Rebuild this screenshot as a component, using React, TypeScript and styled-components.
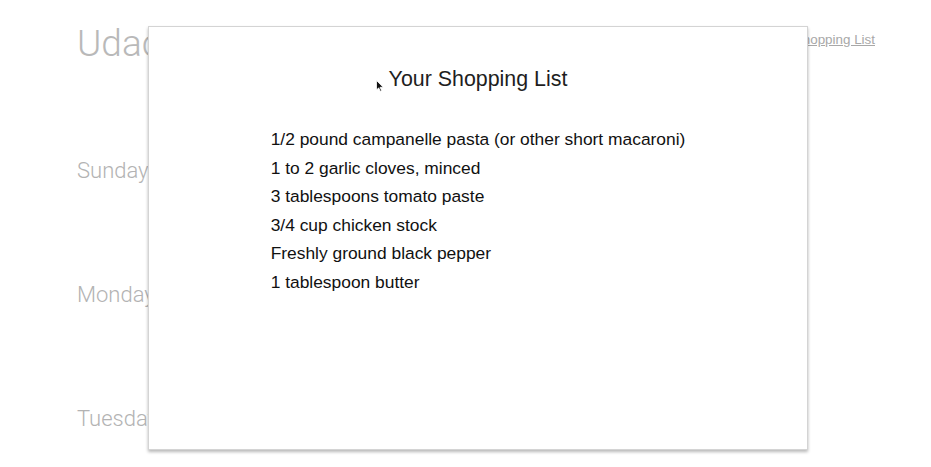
import React from "react";
import styled, { createGlobalStyle } from "styled-components";

const Global = createGlobalStyle`
  html, body { margin: 0; padding: 0; background: #fff; }
  body { font-family: "Liberation Sans", Arial, sans-serif; overflow: hidden; }
`;

const Page = styled.div`
  position: relative;
  width: 931px;
  height: 467px;
  padding: 22px 56px 0 77px;
  box-sizing: border-box;
`;

const Header = styled.header`
  display: flex;
  justify-content: space-between;
  align-items: flex-start;
`;

const Brand = styled.h1`
  margin: 0;
  font-family: Roboto, "Liberation Sans", sans-serif;
  font-weight: 300;
  font-size: 37px;
  line-height: 44px;
  color: #b9b9b9;
`;

const NavLink = styled.a`
  margin-top: 10px;
  font-family: "Liberation Sans", Arial, sans-serif;
  font-size: 13.4px;
  color: #a8a8a8;
  text-decoration: underline;
`;

const Days = styled.div`
  display: flex;
  flex-direction: column;
  gap: 99px;
  margin-top: 92px;
`;

const Day = styled.div`
  font-family: Roboto, "Liberation Sans", sans-serif;
  font-weight: 300;
  font-size: 22px;
  line-height: 25px;
  color: #b3b3b3;
`;

const Modal = styled.div`
  position: absolute;
  left: 148px;
  top: 26px;
  width: 660px;
  height: 424px;
  box-sizing: border-box;
  background: #fff;
  border: 1px solid #d4d4d4;
  box-shadow: 0 2px 3px rgba(0, 0, 0, 0.28);
  display: flex;
  flex-direction: column;
  align-items: center;
  padding-top: 38px;
`;

const Title = styled.h3`
  margin: 0;
  font-family: "Liberation Sans", Arial, sans-serif;
  font-weight: 400;
  font-size: 21.4px;
  line-height: 28px;
  color: #1e1e1e;
`;

const List = styled.ul`
  list-style: none;
  margin: 32px 0 0;
  padding: 0;
  text-align: left;
`;

const Item = styled.li`
  font-family: "Liberation Sans", Arial, sans-serif;
  font-size: 17.4px;
  line-height: 28.5px;
  color: #111;
`;

const Cursor = styled.svg`
  position: absolute;
  left: 376px;
  top: 80px;
`;

const items = [
  "1/2 pound campanelle pasta (or other short macaroni)",
  "1 to 2 garlic cloves, minced",
  "3 tablespoons tomato paste",
  "3/4 cup chicken stock",
  "Freshly ground black pepper",
  "1 tablespoon butter",
];

export default function App() {
  return (
    <Page>
      <Global />
      <Header>
        <Brand>UdaciMeals</Brand>
        <NavLink href="#">Shopping List</NavLink>
      </Header>
      <Days>
        <Day>Sunday</Day>
        <Day>Monday</Day>
        <Day>Tuesday</Day>
      </Days>
      <Modal>
        <Title>Your Shopping List</Title>
        <List>
          {items.map((t) => (
            <Item key={t}>{t}</Item>
          ))}
        </List>
      </Modal>
      <Cursor width="8" height="12" viewBox="0 0 8 12">
        <path d="M0.5 0.5 L0.5 10 L2.7 7.8 L4.3 11.3 L5.6 10.7 L4.1 7.3 L7.2 7.3 Z" fill="#111" stroke="#fff" strokeWidth="0.8" />
      </Cursor>
    </Page>
  );
}
